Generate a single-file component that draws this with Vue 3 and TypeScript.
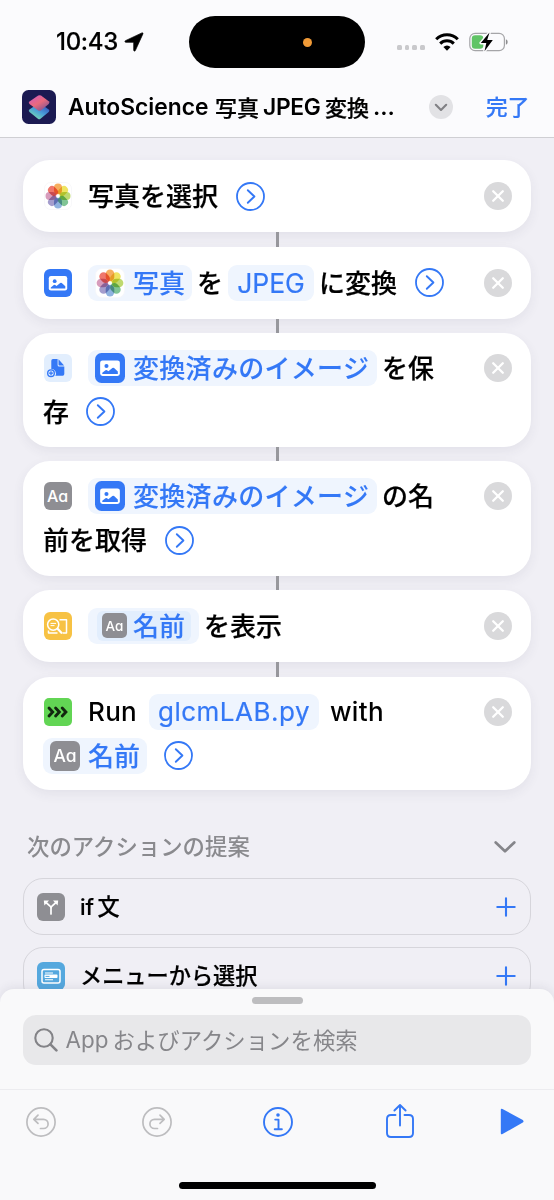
<script setup lang="ts">
interface Petal {
  angle: number
  color: string
}

const petals: Petal[] = [
  { angle: 0, color: '#f5a043' },
  { angle: 45, color: '#ecdf45' },
  { angle: 90, color: '#b3d356' },
  { angle: 135, color: '#69ba82' },
  { angle: 180, color: '#7ba5da' },
  { angle: 225, color: '#948cc4' },
  { angle: 270, color: '#d08bb0' },
  { angle: 315, color: '#ec5f52' },
]

const signalDots: number[] = [1, 2, 3, 4]
</script>

<template>
  <div class="phone">
    <svg class="defs" aria-hidden="true">
      <symbol id="photos" viewBox="0 0 28 28">
        <rect x="0.5" y="0.5" width="27" height="27" rx="6" fill="#fff" stroke="#f5f5f8" stroke-width="0.7" />
        <rect
          v-for="p in petals"
          :key="p.angle"
          class="petal"
          x="10"
          y="1.5"
          width="8"
          height="10.8"
          rx="4"
          :fill="p.color"
          :transform="`rotate(${p.angle} 14 14)`"
        />
      </symbol>
      <symbol id="image" viewBox="0 0 28 28">
        <rect width="28" height="28" rx="6" fill="#3478f6" />
        <rect x="4.8" y="7" width="18.4" height="14.4" rx="2.2" fill="#fff" />
        <circle cx="10.7" cy="12.2" r="1.9" fill="#3478f6" />
        <path d="M6.8 19.6v-1.2l3-2.3q.7-.5 1.4 0l1.3 1 3.7-3.1q.8-.6 1.6 0l3.5 3.3v2.3z" fill="#3478f6" />
      </symbol>
      <symbol id="save" viewBox="0 0 28 28">
        <rect width="28" height="28" rx="6" fill="#e2eefd" />
        <path d="M9 5h4.600v6q0 1.600 1.600 1.600h5.100v7.500q0 1.600-1.600 1.600h-7.400a4.400 4.400 0 0 0-4-6.700V6.700Q7.300 5 9 5z" fill="#3478f6" />
        <path d="M14.500 5.300l5.600 6.100h-4.700q-.9 0-.9-.9z" fill="#3478f6" />
        <circle cx="7" cy="19.200" r="3.300" fill="#e2eefd" stroke="#3478f6" stroke-width="1.400" />
        <path d="M7 17.200v4M5 19.200h4" stroke="#3478f6" stroke-width="1.300" />
      </symbol>
      <symbol id="quicklook" viewBox="0 0 28 28">
        <rect width="28" height="28" rx="6" fill="#f7c244" />
        <g fill="none" stroke="#fff" stroke-width="1.500" stroke-linejoin="round">
          <path d="M15.500 7.800h7v13.200h-4" />
          <path d="M4.500 18.500v2.500h9" />
          <circle cx="9.200" cy="12.600" r="5.600" />
          <path d="M13.600 16.800l3.800 4" stroke-width="2.200" stroke-linecap="round" />
          <path d="M6.500 11.400h5.600M6.500 13.600h4" stroke-width="1" />
        </g>
      </symbol>
      <symbol id="script" viewBox="0 0 28 28">
        <rect width="28" height="28" rx="5" fill="#62d554" />
        <path d="M5 10l3.700 4L5 18M11.600 10l3.700 4-3.700 4M18.200 10l3.700 4-3.700 4" fill="none" stroke="#12260f" stroke-width="2.900" stroke-linecap="round" />
      </symbol>
      <symbol id="branch" viewBox="0 0 28 28">
        <rect width="28" height="28" rx="6" fill="#8e8e93" />
        <path d="M14 21v-5.500q0-1.500-1-2.500L8.500 9M14 16q0-2 1-3l4.500-4" fill="none" stroke="#fff" stroke-width="1.700" stroke-linecap="round" />
        <path d="M6.800 7.400h5.200l-4.600 5zM21.200 7.400H16l4.600 5z" fill="#fff" />
      </symbol>
      <symbol id="menu" viewBox="0 0 28 28">
        <rect width="28" height="28" rx="6" fill="#55a8de" />
        <rect x="5" y="7.500" width="18" height="13.500" rx="2" fill="none" stroke="#fff" stroke-width="1.500" />
        <path d="M8 11h8M8 17.700h8" stroke="#fff" stroke-width="1.100" />
        <rect x="7.500" y="12.600" width="13" height="3.500" rx="0.800" fill="#fff" />
        <path d="M8.500 14.400h4" stroke="#55a8de" stroke-width="1" />
      </symbol>
      <symbol id="go" viewBox="0 0 29 29">
        <circle cx="14.500" cy="14.500" r="13.500" fill="none" stroke="#3478f6" stroke-width="1.800" />
        <path d="M11.800 8.200l6.600 6.300-6.600 6.300" fill="none" stroke="#3478f6" stroke-width="1.900" stroke-linecap="round" stroke-linejoin="round" />
      </symbol>
      <symbol id="remove" viewBox="0 0 28 28">
        <circle cx="14" cy="14" r="14" fill="#d9d9db" />
        <path d="M9.200 9.200l9.600 9.600M18.800 9.200l-9.600 9.600" stroke="#fff" stroke-width="2.300" stroke-linecap="round" />
      </symbol>
      <symbol id="plus" viewBox="0 0 20 20">
        <path d="M10 1.300v17.400M1.300 10h17.400" stroke="#3478f6" stroke-width="2.100" stroke-linecap="round" />
      </symbol>
    </svg>

    <header class="header">
      <div class="status">
        <span class="time">10:43</span>
        <svg class="location" viewBox="0 0 20 20"><path d="M18.900 1.900L11.300 18.600q-.9 1.300-1.600-.3V11q0-.7-.7-.7H1.700q-1.600-.6-.3-1.600L17.900.9q1.500-.3 1 1z" fill="#000" stroke="#000" stroke-width="0.700" stroke-linejoin="round" /></svg>
        <div class="island"><i class="mic-dot"></i></div>
        <div class="signal"><i v-for="d in signalDots" :key="d"></i></div>
        <svg class="wifi" viewBox="0 0 24 18">
          <g fill="none" stroke="#000" stroke-width="3">
            <path d="M1.200 6.300a15.300 15.300 0 0 1 21.600 0" />
            <path d="M5.200 10.600a9.600 9.600 0 0 1 13.600 0" />
          </g>
          <path d="M12 17.700l-3.600-3.700a5 5 0 0 1 7.200 0z" fill="#000" />
        </svg>
        <svg class="battery" viewBox="0 0 40 22">
          <rect x="0.800" y="2.300" width="34.600" height="17.400" rx="5.300" fill="none" stroke="#a5a5a8" stroke-width="1.200" />
          <rect x="2.800" y="4.300" width="11.500" height="13.400" rx="3.300" fill="#60c466" />
          <path d="M36.900 8.200v5.600q1.800-.8 1.800-2.800t-1.800-2.800z" fill="#8e8e90" />
          <path d="M20.500 1.500L11.800 12h5.500l-1.800 8.200 8.300-11.200h-5.600z" fill="#000" stroke="#fbfbfd" stroke-width="2.800" paint-order="stroke" stroke-linejoin="round" />
        </svg>
      </div>
      <div class="navbar">
        <svg class="app-icon" viewBox="0 0 34 34">
          <defs>
            <linearGradient id="pink" x1="0.200" y1="0" x2="0.900" y2="0.900"><stop offset="0" stop-color="#d65cb9" /><stop offset="0.500" stop-color="#ea6a7c" /><stop offset="1" stop-color="#7c5496" /></linearGradient>
            <linearGradient id="teal" x1="0.900" y1="0.200" x2="0.300" y2="1"><stop offset="0" stop-color="#3657c0" /><stop offset="0.500" stop-color="#4a9fd8" /><stop offset="1" stop-color="#79dcb0" /></linearGradient>
          </defs>
          <rect width="34" height="34" rx="6.500" fill="#1b1a52" />
          <path d="M16 13.500h2.500l8.200 6q1.500 1.300 0 2.600l-8.200 6.600q-1.300 1-2.600 0l-8.400-6.600q-1.500-1.300 0-2.600z" fill="url(#teal)" />
          <path d="M16.200 5.600q1.400-.9 2.800 0l7.700 5.700q1.500 1.300 0 2.600l-7.700 6.500q-1.400.9-2.800 0l-8.700-6.400q-1.500-1.300 0-2.600z" fill="url(#pink)" />
        </svg>
        <h1 class="title"><span class="t-name">AutoScience</span><span class="t-photo">写真</span><span class="t-jpeg">JPEG</span><span class="t-conv">変換</span><span>...</span></h1>
        <svg class="expand" viewBox="0 0 24 24">
          <circle cx="12" cy="12" r="12" fill="#e2e2e5" />
          <path d="M6.800 9.800l5.200 5.200 5.200-5.200" fill="none" stroke="#808084" stroke-width="2.100" stroke-linecap="round" stroke-linejoin="round" />
        </svg>
        <span class="done">完了</span>
      </div>
    </header>

    <main class="editor">
      <section class="card">
        <div class="rows">
          <div class="row">
            <svg class="icon"><use href="#photos" /></svg>
            <span class="text">写真を選択</span>
            <svg class="go"><use href="#go" /></svg>
          </div>
        </div>
        <svg class="remove"><use href="#remove" /></svg>
      </section>
      <i class="link long"></i>

      <section class="card">
        <div class="rows">
          <div class="row">
            <svg class="icon"><use href="#image" /></svg>
            <span class="token w-photo"><svg class="token-icon"><use href="#photos" /></svg><b>写真</b></span>
            <span class="text near">を</span>
            <span class="token center w-jpeg">JPEG</span>
            <span class="text near">に変換</span>
            <svg class="go"><use href="#go" /></svg>
          </div>
        </div>
        <svg class="remove"><use href="#remove" /></svg>
      </section>
      <i class="link"></i>

      <section class="card tall">
        <div class="rows">
          <div class="row">
            <svg class="icon"><use href="#save" /></svg>
            <span class="token w-image"><svg class="token-icon"><use href="#image" /></svg><b>変換済みのイメージ</b></span>
            <span class="text near">を保</span>
          </div>
          <div class="row">
            <span class="text">存</span>
            <svg class="go tight"><use href="#go" /></svg>
          </div>
        </div>
        <svg class="remove"><use href="#remove" /></svg>
      </section>
      <i class="link"></i>

      <section class="card tall">
        <div class="rows">
          <div class="row">
            <span class="icon glyph">Aa</span>
            <span class="token w-image"><svg class="token-icon"><use href="#image" /></svg><b>変換済みのイメージ</b></span>
            <span class="text near">の名</span>
          </div>
          <div class="row">
            <span class="text">前を取得</span>
            <svg class="go"><use href="#go" /></svg>
          </div>
        </div>
        <svg class="remove"><use href="#remove" /></svg>
      </section>
      <i class="link"></i>

      <section class="card">
        <div class="rows">
          <div class="row">
            <svg class="icon"><use href="#quicklook" /></svg>
            <span class="token w-name"><span class="inner"><span class="glyph small">Aa</span><b>名前</b></span></span>
            <span class="text near">を表示</span>
          </div>
        </div>
        <svg class="remove"><use href="#remove" /></svg>
      </section>
      <i class="link long"></i>

      <section class="card tall last">
        <div class="rows">
          <div class="row">
            <svg class="icon"><use href="#script" /></svg>
            <span class="text latin run">Run</span>
            <span class="token center w-file">glcmLAB.py</span>
            <span class="text latin with">with</span>
          </div>
          <div class="row">
            <span class="token w-photo"><span class="glyph token-glyph">Aa</span><b>名前</b></span>
            <svg class="go tight"><use href="#go" /></svg>
          </div>
        </div>
        <svg class="remove"><use href="#remove" /></svg>
      </section>

      <div class="suggest-head">
        <h2>次のアクションの提案</h2>
        <svg viewBox="0 0 22 12"><path d="M1.700 1.500l9.300 8.800 9.300-8.800" fill="none" stroke="#85858a" stroke-width="2.700" stroke-linecap="round" stroke-linejoin="round" /></svg>
      </div>
      <div class="suggestion">
        <svg class="icon"><use href="#branch" /></svg>
        <span class="s-text"><span class="s-if">if</span>文</span>
        <svg class="plus"><use href="#plus" /></svg>
      </div>
      <div class="suggestion">
        <svg class="icon"><use href="#menu" /></svg>
        <span class="s-text">メニューから選択</span>
        <svg class="plus"><use href="#plus" /></svg>
      </div>
    </main>

    <footer class="sheet">
      <div class="grabber"></div>
      <div class="search">
        <svg viewBox="0 0 24 24"><circle cx="10" cy="10" r="8.700" fill="none" stroke="#838387" stroke-width="2.100" /><path d="M16.400 16.400l6 6" stroke="#838387" stroke-width="2.600" stroke-linecap="round" /></svg>
        <span class="s-app">App</span><span class="s-hint">およびアクションを検索</span>
      </div>
      <nav class="toolbar">
        <svg class="tool" viewBox="0 0 30 30">
          <g fill="none" stroke="#bdbdbf" stroke-width="1.700" stroke-linecap="round" stroke-linejoin="round"><circle cx="15" cy="15" r="14.100" /><path d="M12 8.200l-4.200 4.100 4.200 4.100M8 12.300h9.500a4.600 4.600 0 0 1 0 9.200h-3" /></g>
        </svg>
        <svg class="tool" viewBox="0 0 30 30">
          <g fill="none" stroke="#bdbdbf" stroke-width="1.700" stroke-linecap="round" stroke-linejoin="round"><circle cx="15" cy="15" r="14.100" /><path d="M18 8.200l4.200 4.100-4.200 4.100M22 12.300h-9.500a4.600 4.600 0 0 0 0 9.200h3" /></g>
        </svg>
        <svg class="tool" viewBox="0 0 30 30">
          <g fill="none" stroke="#3478f6" stroke-width="1.900" stroke-linecap="round" stroke-linejoin="round"><circle cx="15" cy="15" r="14" /><path d="M12.200 12.600h3.300v9.500M11.700 22.200h7.200" /></g><circle cx="15" cy="8" r="1.800" fill="#3478f6" />
        </svg>
        <svg class="share" viewBox="0 0 28 36">
          <path d="M9.500 12H5q-4 0-4 4v14q0 4 4 4h18q4 0 4-4V16q0-4-4-4h-4.500M14 22.500V2.200M8.400 7.500L14 2l5.600 5.500" fill="none" stroke="#3478f6" stroke-width="1.900" stroke-linecap="round" stroke-linejoin="round" />
        </svg>
        <svg class="play" viewBox="0 0 24 27"><path d="M0.800 1.800q0-1.700 1.700-.9l20.300 11.200q1.500 1.300 0 2.500L2.500 26q-1.700.9-1.700-.9z" fill="#3478f6" /></svg>
      </nav>
      <div class="home"></div>
    </footer>
  </div>
</template>

<style>
html,
body {
  margin: 0;
  background: #f0eff5;
}
</style>

<style scoped>
.phone {
  width: 554px;
  height: 1200px;
  display: flex;
  flex-direction: column;
  overflow: hidden;
  background: #f0eff5;
  font-family: Inter, "Noto Sans CJK JP", sans-serif;
  font-weight: 500;
  color: #000;
}
.phone * {
  box-sizing: border-box;
}
.phone svg {
  flex: none;
  display: block;
}
.phone .defs {
  position: absolute;
  width: 0;
  height: 0;
}
.petal {
  mix-blend-mode: multiply;
  opacity: 0.85;
}
.header {
  flex: none;
  height: 138px;
  background: #fbfbfd;
  border-bottom: 1px solid #cfcfd3;
}
.status {
  height: 76px;
  padding: 8px 45px 0 56px;
  display: flex;
  align-items: center;
}
.time {
  width: 68px;
  font-size: 24px;
  line-height: 30px;
  letter-spacing: -0.300px;
  white-space: nowrap;
  -webkit-text-stroke: 0.200px currentColor;
}
.location {
  width: 20px;
  height: 20px;
}
.island {
  width: 176px;
  height: 52px;
  margin-left: 45px;
  border-radius: 26px;
  background: #000;
  display: flex;
  align-items: center;
}
.mic-dot {
  width: 9px;
  height: 9px;
  margin-left: 114px;
  border-radius: 50%;
  background: #f09a37;
}
.signal {
  display: flex;
  gap: 3px;
  margin: 11px 0 0 32px;
}
.signal i {
  width: 4.700px;
  height: 4.700px;
  border-radius: 1.500px;
  background: #c9c9cc;
}
.wifi {
  width: 24px;
  height: 18px;
  margin: -1px 0 0 10px;
}
.battery {
  width: 40px;
  height: 22px;
  margin: -1px 0 0 10px;
}
.navbar {
  height: 61px;
  padding-left: 22px;
  display: flex;
  align-items: center;
}
.app-icon {
  width: 34px;
  height: 34px;
}
.title {
  width: 361px;
  height: 34px;
  margin: 0;
  padding-left: 12px;
  display: flex;
  font-size: 22.800px;
  font-weight: 600;
  line-height: 34px;
  white-space: nowrap;
}
.title span {
  flex: none;
}
.t-name {
  width: 147px;
}
.t-photo,
.t-conv {
  padding-top: 1px;
  font-size: 22px;
  font-weight: 500;
  -webkit-text-stroke: 0.250px currentColor;
}
.t-photo {
  width: 48px;
}
.t-jpeg {
  width: 62px;
  letter-spacing: -0.300px;
}
.t-conv {
  width: 48px;
}
.expand {
  width: 24px;
  height: 24px;
  margin-left: 12px;
}
.done {
  margin-left: 33px;
  font-size: 21.700px;
  line-height: 34px;
  color: #3478f6;
  -webkit-text-stroke: 0.200px currentColor;
}
.editor {
  flex: none;
  height: 866px;
  padding: 22px 23px 0;
  overflow: hidden;
}
.card {
  height: 72px;
  padding: 14px 19px 0 20px;
  display: flex;
  border-radius: 27px;
  background: #fff;
  box-shadow: 0 4px 12px rgba(60, 60, 80, 0.07);
}
.card.tall {
  height: 114.300px;
  padding-top: 13px;
}
.card.last {
  height: 113px;
}
.link {
  display: block;
  width: 3px;
  height: 14.200px;
  margin: 0 auto;
  background: #98989d;
}
.link.long {
  height: 14.700px;
}
.rows {
  flex: 1;
}
.row {
  height: 44px;
  display: flex;
  align-items: center;
}
.icon {
  width: 28px;
  height: 28px;
  margin-left: 0.500px;
  margin-right: 16.500px;
}
.text,
.token {
  flex: none;
  font-size: 26px;
  line-height: 36px;
  white-space: nowrap;
}
.text {
  padding-top: 2px;
  -webkit-text-stroke: 0.200px currentColor;
}
.text.latin {
  padding-top: 0;
  -webkit-text-stroke-width: 0;
}
.token b {
  padding-top: 2px;
  font-weight: 500;
  -webkit-text-stroke: 0.100px currentColor;
}
.near {
  margin: 0 5px;
}
.go {
  width: 29px;
  height: 29px;
  margin-left: 17.500px;
}
.go.tight {
  margin-left: 16.500px;
}
.near + .go {
  margin-left: 13px;
}
.remove {
  width: 28px;
  height: 28px;
  margin-top: 8px;
}
.token {
  height: 36px;
  padding-left: 7px;
  display: flex;
  align-items: center;
  border-radius: 9px;
  background: #eff5fe;
  color: #3478f6;
}
.token.center {
  padding: 0;
  justify-content: center;
  font-weight: 400;
  -webkit-text-stroke: 0.200px currentColor;
}
.token-icon {
  width: 30px;
  height: 30px;
  margin-right: 8px;
}
.w-photo {
  width: 104px;
}
.w-jpeg {
  width: 86px;
  font-size: 26.500px;
}
.w-image {
  width: 289px;
  letter-spacing: 0.300px;
}
.w-name {
  width: 111px;
}
.w-file {
  width: 170px;
  letter-spacing: 0.500px;
}
.run {
  width: 61px;
  letter-spacing: 0.300px;
}
.with {
  margin-left: 11px;
  letter-spacing: 0.300px;
}
.glyph {
  flex: none;
  display: flex;
  align-items: center;
  justify-content: center;
  border-radius: 6px;
  background: #8e8e93;
  color: #fff;
  font-size: 16px;
  letter-spacing: 0;
  font-feature-settings: "cv11";
}
.token-glyph {
  width: 30px;
  height: 30px;
  margin-right: 8px;
  font-size: 17.500px;
}
.glyph.small {
  width: 25px;
  height: 25px;
  margin-right: 6px;
  border-radius: 5px;
  font-size: 13.500px;
}
.inner {
  width: 94px;
  height: 30px;
  margin-left: 2px;
  padding-left: 5px;
  display: flex;
  align-items: center;
  border-radius: 6px;
  background: #e2eefd;
}
.suggest-head {
  height: 88.500px;
  padding: 26px 15px 0 4px;
  display: flex;
  align-items: center;
  justify-content: space-between;
}
.suggest-head h2 {
  margin: 0;
  font-size: 22.400px;
  font-weight: 500;
  line-height: 34px;
  color: #8a8a8e;
}
.suggest-head svg {
  width: 22px;
  height: 12px;
  margin-bottom: -1px;
}
.suggestion {
  height: 57px;
  margin-bottom: 12px;
  padding: 0 14px 0 13px;
  display: flex;
  align-items: center;
  border: 1px solid #d6d5db;
  border-radius: 20px;
}
.suggestion .icon {
  margin-left: 0;
  margin-right: 15px;
}
.s-text {
  flex: 1;
  font-size: 22.200px;
  line-height: 34px;
  padding-top: 1px;
  -webkit-text-stroke: 0.200px currentColor;
}
.s-if {
  display: inline-block;
  width: 17.500px;
}
.plus {
  width: 20px;
  height: 20px;
}
.sheet {
  position: relative;
  height: 211px;
  margin-top: -15px;
  flex: none;
  display: flex;
  flex-direction: column;
  align-items: center;
  border-radius: 14px 14px 0 0;
  background: #f9f9fa;
  box-shadow: 0 -2px 10px rgba(60, 60, 80, 0.09);
}
.grabber {
  flex: none;
  width: 51px;
  height: 7px;
  margin-top: 8px;
  border-radius: 4px;
  background: #bdbdbf;
}
.search {
  flex: none;
  width: 508px;
  height: 50px;
  margin-top: 11px;
  padding-left: 10.500px;
  display: flex;
  align-items: center;
  border-radius: 13px;
  background: #e8e8ea;
  color: #86868a;
  font-size: 22.400px;
  font-weight: 400;
  line-height: 34px;
}
.search svg {
  width: 24px;
  height: 24px;
  margin-right: 8px;
}
.s-app {
  width: 47px;
}
.s-hint {
  padding-top: 1px;
}
.toolbar {
  flex: none;
  width: 554px;
  height: 64px;
  margin-top: 24px;
  display: grid;
  grid-template-columns: 81px 151px 92px 152px 72px;
  align-items: center;
  justify-items: center;
  border-top: 1px solid #ececef;
}
.tool {
  width: 30px;
  height: 30px;
}
.share {
  width: 28px;
  height: 36px;
  margin-bottom: 2px;
}
.play {
  width: 24px;
  height: 27px;
}
.home {
  flex: none;
  width: 197px;
  height: 7px;
  margin-top: 28.500px;
  border-radius: 4px;
  background: #000;
}
</style>
